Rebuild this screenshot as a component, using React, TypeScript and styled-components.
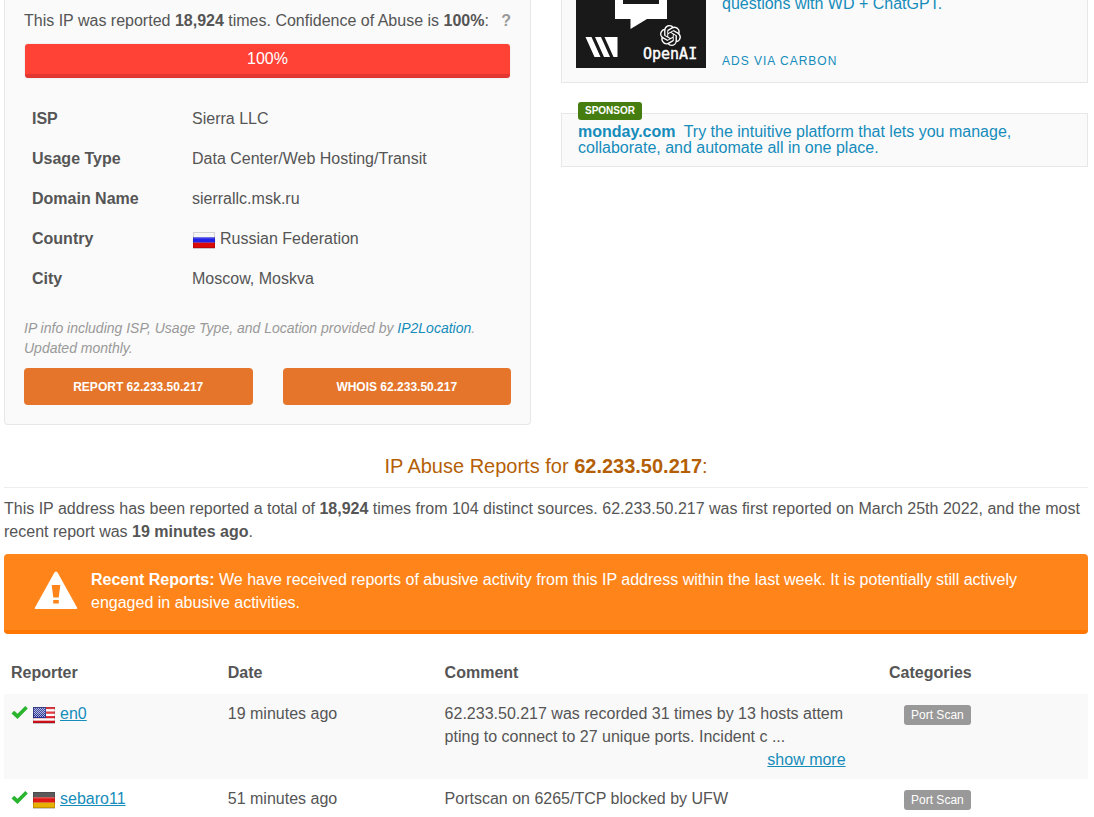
import React from "react";
import styled, { createGlobalStyle } from "styled-components";
import { SiOpenai } from "react-icons/si";

const GlobalStyle = createGlobalStyle`
  * { box-sizing: border-box; }
  body {
    margin: 0;
    background: #fff;
    color: #555;
    font: 16px/23px "Liberation Sans", Arial, sans-serif;
    overflow: hidden;
  }
  p, h2 { margin: 0; }
`;

const Link = styled.a<{ $underline?: boolean }>`
  color: #158cba;
  text-decoration: ${(p) => (p.$underline ? "underline" : "none")};
`;

const Page = styled.main`
  padding: 0 6px 0 4px;
`;

const Columns = styled.div`
  display: grid;
  grid-template-columns: 1fr 1fr;
  column-gap: 30px;
  align-items: start;
`;

const Well = styled.section`
  padding: 9px 19px 19px;
  background: #fafafa;
  border: 1px solid #e7e7e7;
  border-top: 0;
  border-radius: 0 0 4px 4px;
`;

const Summary = styled.div`
  display: flex;
  justify-content: space-between;
`;

const Help = styled.strong`
  color: #999;
`;

const Progress = styled.div`
  margin: 11px 0 19px;
  padding: 1px;
  background: #f2f2f2;
  border-radius: 4px;
`;

const ProgressFill = styled.div`
  width: 100%;
  border-bottom: 4px solid #e23630;
  border-radius: 3px;
  background: #ff4136;
  color: #fff;
  line-height: 30px;
  text-align: center;
`;

const FactsTable = styled.table`
  width: 100%;
  border-collapse: collapse;

  th, td {
    height: 40px;
    padding: 8px;
    text-align: left;
  }
  th { width: 160px; }
`;

const FlagSvg = styled.svg`
  display: inline-block;
  width: 24px;
  height: 18px;
  margin-right: 4px;
  vertical-align: -5px;
`;

const Note = styled.p`
  margin: 20px 0 10px;
  color: #999;
  font-size: 14px;
  line-height: 20px;
  font-style: italic;
`;

const Buttons = styled.div`
  display: grid;
  grid-template-columns: 1fr 1fr;
  column-gap: 30px;
`;

const ActionButton = styled.button`
  height: 37px;
  padding: 2px 12px 0;
  border: 0;
  border-radius: 4px;
  background: #e4752b;
  color: #fff;
  font: bold 12px/17px "Liberation Sans", Arial, sans-serif;
  text-transform: uppercase;
`;

const AdCard = styled.aside`
  display: flex;
  gap: 16px;
  margin-top: -48px;
  padding: 15px 14px 14px;
  background: #fafafa;
  border: 1px solid #e7e7e7;
`;

const AdArt = styled.svg`
  flex: none;
  width: 130px;
  height: 100px;
`;

const AdText = styled.div`
  display: flex;
  flex-direction: column;
  justify-content: space-between;
  padding-top: 24px;
`;

const AdVia = styled(Link)`
  font-size: 12px;
  line-height: 14px;
  letter-spacing: 1px;
  text-transform: uppercase;
`;

const SponsorCard = styled.aside`
  position: relative;
  margin-top: 30px;
  padding: 10px 16px;
  background: #fafafa;
  border: 1px solid #e7e7e7;
  line-height: 16px;
`;

const SponsorTag = styled.span`
  position: absolute;
  top: -12px;
  left: 16px;
  padding: 0 7px;
  border-radius: 3px;
  background: #467d11;
  color: #fff;
  font-size: 10px;
  font-weight: bold;
  line-height: 18px;
`;

const SponsorName = styled.strong`
  margin-right: 4px;
`;

const Heading = styled.h2`
  margin: 29px 0 9px;
  padding-bottom: 9px;
  border-bottom: 1px solid #eee;
  color: #b45f06;
  font-size: 20px;
  font-weight: normal;
  line-height: 24px;
  text-align: center;
`;

const Alert = styled.div`
  display: flex;
  gap: 13px;
  margin: 11px 0 19px;
  padding: 14px 30px 16px;
  border-bottom: 4px solid #ff7701;
  border-radius: 4px;
  background: #ff851b;
  color: #fff;
`;

const AlertIcon = styled.svg`
  flex: none;
  width: 44px;
  height: 44px;
`;

const ReportsTable = styled.table`
  width: 100%;
  border-collapse: collapse;
  table-layout: fixed;

  th, td {
    padding: 8px 7px;
    text-align: left;
    vertical-align: top;
  }
  th { height: 41px; }
  tbody tr:nth-child(odd) { background: #f9f9f9; }
`;

const Col = styled.col<{ $width?: string }>`
  width: ${(p) => p.$width ?? "auto"};
`;

const Comment = styled.div`
  max-width: 401px;
  word-break: break-all;
`;

const More = styled.div`
  max-width: 401px;
  text-align: right;
`;

const CheckSvg = styled.svg`
  width: 17px;
  height: 13px;
  margin-right: 4px;
`;

const Badge = styled.span`
  display: block;
  width: fit-content;
  margin: 3px 0 0 15px;
  padding: 0 7px;
  border-radius: 3px;
  background: #999;
  color: #fff;
  font-size: 12px;
  line-height: 20px;
`;

type Country = "ru" | "us" | "de";

const flagBands: Record<Country, string[]> = {
  ru: ["#f6f6f6", "#2323e8", "#dd0a0a"],
  us: ["#e0202a", "#fff", "#e0202a", "#fff", "#e0202a", "#fff", "#d8101a"],
  de: ["#444", "#e01818", "#e8b000"],
};

function Flag({ country }: { country: Country }) {
  const bands = flagBands[country];
  const h = 16 / bands.length;
  return (
    <FlagSvg viewBox="0 0 24 18" role="img" aria-label={country}>
      <rect x="1" y="2" width="22" height="16" fill="#000" opacity="0.2" />
      {bands.map((color, i) => (
        <rect key={i} x="1" y={1 + i * h} width="22" height={h} fill={color} />
      ))}
      {country === "us" && (
        <>
          <rect x="1" y="1" width="13" height="11" fill="#28338f" />
          {[2, 3, 4, 5, 6, 7, 8, 9, 10].map((y) => (
            <path key={y} d={`M${2 + (y % 2)} ${y + 0.5}H13`} stroke="#a9b0dc" strokeDasharray="1 1" />
          ))}
        </>
      )}
      <rect x="1" y="1" width="22" height="7" fill="#fff" opacity="0.12" />
      <rect x="1.5" y="1.5" width="21" height="15" fill="none" stroke="#000" opacity="0.15" />
    </FlagSvg>
  );
}

function Check() {
  return (
    <CheckSvg viewBox="0 0 17 13" aria-label="Verified">
      <path d="M.5 7.4 3.2 4.7 6.5 7.7 14.3 0 16.8 2.5 6.5 12.9Z" fill="#2ab52f" />
    </CheckSvg>
  );
}

function Artwork() {
  return (
    <AdArt viewBox="0 0 130 100" role="img" aria-label="OpenAI">
      <rect width="130" height="100" fill="#191919" />
      <path d="M39 0H91V51H71L54.500 61V51H39Z" fill="#fff" />
      <path d="M47 20H83V36H47Z" fill="#191919" />
      <path d="M9.500 69H15.500L24.500 89H18.500ZM19 69H25L34 89H28ZM28.500 69H41.500V89H37.500Z" fill="#fff" />
      <SiOpenai x="84" y="57" size={21} color="#fff" />
      <text
        x="67"
        y="91"
        fill="#fff"
        stroke="#fff"
        strokeWidth="0.4"
        fontSize="15"
        fontFamily="DejaVu Sans Mono, monospace"
      >
        OpenAI
      </text>
    </AdArt>
  );
}

const facts: { label: string; value: string; country?: Country }[] = [
  { label: "ISP", value: "Sierra LLC" },
  { label: "Usage Type", value: "Data Center/Web Hosting/Transit" },
  { label: "Domain Name", value: "sierrallc.msk.ru" },
  { label: "Country", value: "Russian Federation", country: "ru" },
  { label: "City", value: "Moscow, Moskva" },
];

const reports: { name: string; country: Country; date: string; comment: string; more?: boolean }[] = [
  {
    name: "en0",
    country: "us",
    date: "19 minutes ago",
    comment: "62.233.50.217 was recorded 31 times by 13 hosts attempting to connect to 27 unique ports. Incident c ...",
    more: true,
  },
  { name: "sebaro11", country: "de", date: "51 minutes ago", comment: "Portscan on 6265/TCP blocked by UFW" },
];

export default function App() {
  return (
    <Page>
      <GlobalStyle />
      <Columns>
        <Well>
          <Summary>
            <p>
              This IP was reported <b>18,924</b> times. Confidence of Abuse is <b>100%</b>:
            </p>
            <Help>?</Help>
          </Summary>
          <Progress>
            <ProgressFill>100%</ProgressFill>
          </Progress>
          <FactsTable>
            <tbody>
              {facts.map((f) => (
                <tr key={f.label}>
                  <th scope="row">{f.label}</th>
                  <td>
                    {f.country && <Flag country={f.country} />}
                    {f.value}
                  </td>
                </tr>
              ))}
            </tbody>
          </FactsTable>
          <Note>
            IP info including ISP, Usage Type, and Location provided by <Link href="#ip2location">IP2Location</Link>.
            Updated monthly.
          </Note>
          <Buttons>
            <ActionButton type="button">Report 62.233.50.217</ActionButton>
            <ActionButton type="button">Whois 62.233.50.217</ActionButton>
          </Buttons>
        </Well>
        <div>
          <AdCard>
            <Artwork />
            <AdText>
              <Link href="#ad">questions with WD + ChatGPT.</Link>
              <AdVia href="#carbon">Ads via Carbon</AdVia>
            </AdText>
          </AdCard>
          <SponsorCard>
            <SponsorTag>SPONSOR</SponsorTag>
            <Link href="#sponsor">
              <SponsorName>monday.com</SponsorName> Try the intuitive platform that lets you manage, collaborate, and
              automate all in one place.
            </Link>
          </SponsorCard>
        </div>
      </Columns>

      <Heading>
        IP Abuse Reports for <b>62.233.50.217</b>:
      </Heading>
      <p>
        This IP address has been reported a total of <b>18,924</b> times from 104 distinct sources. 62.233.50.217 was
        first reported on March 25th 2022, and the most recent report was <b>19 minutes ago</b>.
      </p>
      <Alert role="alert">
        <AlertIcon viewBox="0 0 44 44" aria-hidden="true">
          <path
            fillRule="evenodd"
            fill="#fff"
            d="M22 3.5Q23 3.5 24 5.2L43 39.5Q43.8 41 42.500 41H1.5Q.2 41 1 39.5L20 5.2Q21 3.5 22 3.5ZM17.700 17 19.3 29.6H24.7L26.300 17ZM19.2 32V35.5H24.8V32Z"
          />
        </AlertIcon>
        <p>
          <b>Recent Reports:</b> We have received reports of abusive activity from this IP address within the last week.
          It is potentially still actively engaged in abusive activities.
        </p>
      </Alert>

      <ReportsTable>
        <colgroup>
          <Col $width="20%" />
          <Col $width="20%" />
          <Col $width="41%" />
          <Col />
        </colgroup>
        <thead>
          <tr>
            <th scope="col">Reporter</th>
            <th scope="col">Date</th>
            <th scope="col">Comment</th>
            <th scope="col">Categories</th>
          </tr>
        </thead>
        <tbody>
          {reports.map((r) => (
            <tr key={r.name}>
              <td>
                <Check />
                <Flag country={r.country} />
                <Link $underline href={`#${r.name}`}>{r.name}</Link>
              </td>
              <td>{r.date}</td>
              <td>
                <Comment>{r.comment}</Comment>
                {r.more && (
                  <More>
                    <Link $underline href="#more">show more</Link>
                  </More>
                )}
              </td>
              <td>
                <Badge>Port Scan</Badge>
              </td>
            </tr>
          ))}
        </tbody>
      </ReportsTable>
    </Page>
  );
}
